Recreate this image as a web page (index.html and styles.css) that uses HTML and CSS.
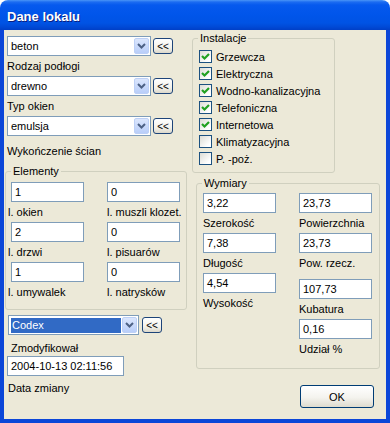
FILE: index.html
```html
<!DOCTYPE html>
<html lang="pl">
<head>
<meta charset="utf-8"/>
<meta content="width=device-width, initial-scale=1.0" name="viewport"/>
<title>Dane lokalu</title>
<link rel="stylesheet" href="styles.css">
</head>
<body>
<div class="window">
  <div class="titlebar"><span class="title">Dane lokalu</span></div>
  <div class="client">

    <div class="col-left">
      <div class="combo-row first">
        <div class="combo"><span class="combo-text">beton</span><span class="combo-btn"><svg width="9" height="6" viewBox="0 0 9 6"><path d="M1 1 L4.5 4.5 L8 1" fill="none" stroke="#4d6185" stroke-width="2"/></svg></span></div>
        <button class="pick">&lt;&lt;</button>
      </div>
      <div class="caption">Rodzaj podłogi</div>
      <div class="combo-row">
        <div class="combo"><span class="combo-text">drewno</span><span class="combo-btn"><svg width="9" height="6" viewBox="0 0 9 6"><path d="M1 1 L4.5 4.5 L8 1" fill="none" stroke="#4d6185" stroke-width="2"/></svg></span></div>
        <button class="pick">&lt;&lt;</button>
      </div>
      <div class="caption">Typ okien</div>
      <div class="combo-row">
        <div class="combo"><span class="combo-text">emulsja</span><span class="combo-btn"><svg width="9" height="6" viewBox="0 0 9 6"><path d="M1 1 L4.5 4.5 L8 1" fill="none" stroke="#4d6185" stroke-width="2"/></svg></span></div>
        <button class="pick">&lt;&lt;</button>
      </div>
      <div class="caption last">Wykończenie ścian</div>

      <fieldset class="group elements">
        <legend>Elementy</legend>
        <div class="pairs">
          <div class="cell"><div class="edit">1</div><div class="cell-label shift">l. okien</div></div>
          <div class="cell"><div class="edit">0</div><div class="cell-label">l. muszli klozet.</div></div>
          <div class="cell"><div class="edit">2</div><div class="cell-label shift">l. drzwi</div></div>
          <div class="cell"><div class="edit">0</div><div class="cell-label">l. pisuarów</div></div>
          <div class="cell"><div class="edit">1</div><div class="cell-label shift">l. umywalek</div></div>
          <div class="cell"><div class="edit">0</div><div class="cell-label">l. natrysków</div></div>
        </div>
      </fieldset>

      <div class="combo-row user">
        <div class="combo short"><span class="combo-text selected">Codex</span><span class="combo-btn"><svg width="9" height="6" viewBox="0 0 9 6"><path d="M1 1 L4.5 4.5 L8 1" fill="none" stroke="#4d6185" stroke-width="2"/></svg></span></div>
        <button class="pick">&lt;&lt;</button>
      </div>
      <div class="caption modified">Zmodyfikował</div>
      <div class="edit date">2004-10-13 02:11:56</div>
      <div class="caption changed">Data zmiany</div>
    </div>

    <div class="col-right">
      <fieldset class="group install">
        <legend>Instalacje</legend>
        <div class="checks">
          <div class="check-row"><span class="box on"><svg width="11" height="11" viewBox="0 0 11 11"><path d="M2 5 L4.5 7.5 L9 3" fill="none" stroke="#21a121" stroke-width="2.2"/></svg></span>Grzewcza</div>
          <div class="check-row"><span class="box on"><svg width="11" height="11" viewBox="0 0 11 11"><path d="M2 5 L4.5 7.5 L9 3" fill="none" stroke="#21a121" stroke-width="2.2"/></svg></span>Elektryczna</div>
          <div class="check-row"><span class="box on"><svg width="11" height="11" viewBox="0 0 11 11"><path d="M2 5 L4.5 7.5 L9 3" fill="none" stroke="#21a121" stroke-width="2.2"/></svg></span>Wodno-kanalizacyjna</div>
          <div class="check-row"><span class="box on"><svg width="11" height="11" viewBox="0 0 11 11"><path d="M2 5 L4.5 7.5 L9 3" fill="none" stroke="#21a121" stroke-width="2.2"/></svg></span>Telefoniczna</div>
          <div class="check-row"><span class="box on"><svg width="11" height="11" viewBox="0 0 11 11"><path d="M2 5 L4.5 7.5 L9 3" fill="none" stroke="#21a121" stroke-width="2.2"/></svg></span>Internetowa</div>
          <div class="check-row"><span class="box"></span>Klimatyzacyjna</div>
          <div class="check-row"><span class="box"></span>P. -poż.</div>
        </div>
      </fieldset>

      <fieldset class="group dims">
        <legend>Wymiary</legend>
        <div class="dim-cols">
          <div class="dim-col">
            <div class="edit">3,22</div><div class="cell-label">Szerokość</div>
            <div class="edit">7,38</div><div class="cell-label">Długość</div>
            <div class="edit">4,54</div><div class="cell-label">Wysokość</div>
          </div>
          <div class="dim-col">
            <div class="edit">23,73</div><div class="cell-label">Powierzchnia</div>
            <div class="edit">23,73</div><div class="cell-label">Pow. rzecz.</div>
            <div class="edit lower">107,73</div><div class="cell-label">Kubatura</div>
            <div class="edit">0,16</div><div class="cell-label">Udział %</div>
          </div>
        </div>
      </fieldset>

      <button class="ok">OK</button>
    </div>

  </div>
</div>
</body>
</html>
```

FILE: styles.css
```css
* {
  box-sizing: border-box;
}
body {
  margin: 0;
  background: #ffffff;
  font-family: "Liberation Sans", Arial, sans-serif;
  font-size: 11px;
  color: #000000;
}
.window {
  width: 390px;
  height: 423px;
  display: flex;
  flex-direction: column;
}
.titlebar {
  height: 30px;
  flex: none;
  display: flex;
  align-items: center;
  padding: 2px 0 0 7px;
  border-radius: 8px 8px 0 0;
  background: linear-gradient(to bottom, #4a95f7 0px, #1c6cf1 2px, #0659ee 5px, #0055ea 15px, #0053e4 23px, #0049d6 27px, #003fc6 30px);
}
.title {
  color: #ffffff;
  font-weight: bold;
  font-size: 13px;
  text-shadow: 1px 1px 0 #0a1e80;
}
.client {
  flex: 1;
  display: flex;
  background: #ece9d8;
  border: 4px solid #0b46d8;
  border-top: 0;
}

/* left column */
.col-left {
  width: 183px;
  flex: none;
  display: flex;
  flex-direction: column;
}
.combo-row {
  display: flex;
  align-items: center;
  gap: 2px;
  height: 20px;
  margin-left: 3px;
}
.combo-row.first {
  margin-top: 6px;
}
.combo {
  width: 144px;
  height: 20px;
  display: flex;
  padding: 1px;
  border: 1px solid #7f9db9;
  background: #ffffff;
}
.combo.short {
  width: 131px;
}
.combo-text {
  flex: 1;
  line-height: 16px;
  padding-left: 2px;
}
.combo-text.selected {
  margin: 1px 1px 0 1px;
  line-height: 15px;
  padding-left: 1px;
  background: #316ac5;
  color: #ffffff;
}
.combo-btn {
  width: 15px;
  height: 16px;
  display: flex;
  align-items: center;
  justify-content: center;
  border: 1px solid #bdd0f6;
  border-radius: 2px;
  background: linear-gradient(to bottom, #dbe6fd, #b9cef9);
}
.pick {
  width: 20px;
  height: 16px;
  padding: 0;
  border: 1px solid #1d4479;
  border-radius: 3px;
  background: linear-gradient(to bottom, #ffffff, #f3f2ec 60%, #dcd8cb);
  font-family: "Liberation Sans", Arial, sans-serif;
  font-size: 10px;
  line-height: 13px;
  color: #000000;
}
.caption {
  line-height: 20px;
  margin-left: 3px;
}
.caption.last {
  margin-top: 5px;
}
.group {
  margin: 0;
  padding: 0;
  border: 1px solid #d0d0bf;
  border-radius: 3px;
}
.group legend {
  margin-left: 5px;
  padding: 0 2px;
  line-height: 13px;
}
.elements {
  margin: 4px 0 0 1px;
  width: 182px;
}
.pairs {
  display: grid;
  grid-template-columns: 73px 73px;
  column-gap: 23px;
  padding: 4px 0 7px 5px;
}
.cell {
  display: flex;
  flex-direction: column;
}
.edit {
  width: 73px;
  height: 20px;
  padding-left: 3px;
  line-height: 18px;
  border: 1px solid #7f9db9;
  background: #ffffff;
}
.cell-label {
  line-height: 20px;
  white-space: nowrap;
}
.cell-label.shift {
  margin-left: -3px;
}
.combo-row.user {
  margin: 5px 0 0 4px;
  gap: 3px;
}
.caption.modified {
  margin: 5px 0 0 7px;
  line-height: 16px;
}
.edit.date {
  width: 117px;
  margin-left: 3px;
}
.caption.changed {
  margin: 2px 0 0 4px;
}

/* right column */
.col-right {
  margin-left: 5px;
  width: 188px;
  display: flex;
  flex-direction: column;
}
.install {
  margin-top: 2px;
  width: 143px;
}
.checks {
  padding: 3px 0 5px 6px;
}
.check-row {
  height: 17px;
  display: flex;
  align-items: center;
  gap: 4px;
}
.box {
  width: 13px;
  height: 13px;
  display: flex;
  border: 1px solid #1c5180;
  background: linear-gradient(135deg, #dcdcd5, #ffffff 80%);
}
.dims {
  margin: 4px 0 0 4px;
  width: 184px;
}
.dim-cols {
  display: flex;
  gap: 23px;
  padding: 3px 0 9px 6px;
}
.dim-col {
  display: flex;
  flex-direction: column;
}
.edit.lower {
  margin-top: 6px;
}
.ok {
  margin: 16px 0 0 108px;
  width: 74px;
  height: 23px;
  padding: 0;
  border: 1px solid #003c74;
  border-radius: 3px;
  background: linear-gradient(to bottom, #ffffff, #f4f3ee 55%, #dedbce);
  font-family: "Liberation Sans", Arial, sans-serif;
  font-size: 11px;
  color: #000000;
}
```
